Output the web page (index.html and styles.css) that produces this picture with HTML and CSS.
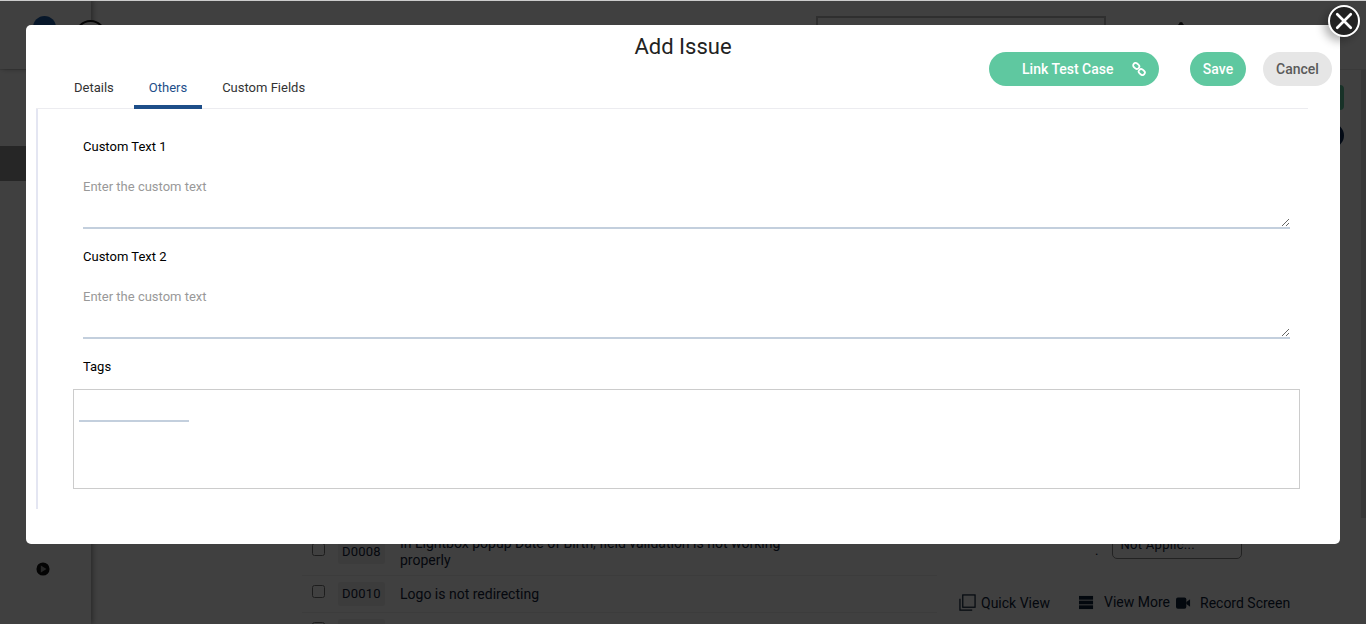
FILE: index.html
```html
<!DOCTYPE html>
<html lang="en">
<head>
<meta charset="utf-8">
<title>Add Issue</title>
<link rel="stylesheet" href="styles.css">
</head>
<body>
<div class="page">
  <header class="topbar">
    <div class="brand">
      <span class="dot"></span>
      <span class="ring"></span>
    </div>
    <div class="search"></div>
    <svg class="bell" viewBox="0 0 16 16" width="16" height="16"><path d="M8 1a2 2 0 0 1 2 2c2 1 2.500 3 2.500 5l1.500 3H2l1.500-3C3.500 6 4 4 6 3a2 2 0 0 1 2-2z" fill="#222"/></svg>
  </header>
  <div class="workspace">
    <aside class="sidebar">
      <div class="side-active"></div>
      <svg class="side-play" viewBox="0 0 16 16" width="14" height="14"><circle cx="8" cy="8" r="7.500" fill="#111"/><path d="M5.500 4v8l6.500-4z" fill="#999"/></svg>
    </aside>
    <main class="list-area">
      <div class="issue-list">
        <div class="issue-row">
          <input class="check" type="checkbox">
          <span class="code">D0008</span>
          <p class="issue-text">In Lightbox popup Date of Birth, field validation is not working properly</p>
        </div>
        <div class="issue-row">
          <input class="check" type="checkbox">
          <span class="code">D0010</span>
          <p class="issue-text">Logo is not redirecting</p>
        </div>
        <div class="issue-row">
          <input class="check" type="checkbox">
          <span class="code"></span>
        </div>
      </div>
    </main>
    <section class="detail">
      <div class="status-chips">
        <span class="chip-green"></span>
        <span class="chip-dark"></span>
      </div>
      <div class="select-line"><span class="bullet">.</span><span class="select">Not Applic...</span></div>
      <div class="detail-actions">
        <span class="act act-quick"><svg viewBox="0 0 18 18" width="17" height="17" fill="none" stroke="#0e2238" stroke-width="1.300"><rect x="4" y="1" width="13" height="13"/><path d="M1 5v12h13"/></svg>Quick View</span>
        <span class="act act-more"><svg viewBox="0 0 16 16" width="15" height="15" fill="#0e2238"><rect y="1" width="15" height="4"/><rect y="6" width="15" height="4"/><rect y="11" width="15" height="4"/></svg>View More</span>
        <span class="act act-rec"><svg viewBox="0 0 16 12" width="15" height="12" fill="#0e2238"><rect width="11" height="12" rx="2"/><path d="M11 5l4-3v8l-4-3z"/></svg>Record Screen</span>
      </div>
    </section>
  </div>
</div>

<div class="backdrop"></div>

<div class="modal">
  <div class="modal-head">
    <h1 class="modal-title">Add Issue</h1>
    <div class="modal-actions">
      <button class="btn btn-link" type="button">Link Test Case
        <svg class="link-icon" viewBox="0 0 14 14" width="14" height="14" fill="none" stroke="#fff" stroke-width="1.800"><rect x="1" y="1.500" width="6.500" height="4.800" rx="2.400" transform="rotate(40 4.200 3.900)"/><rect x="6.500" y="7.700" width="6.500" height="4.800" rx="2.400" transform="rotate(40 9.800 10.100)"/></svg>
      </button>
      <button class="btn btn-save" type="button">Save</button>
      <button class="btn btn-cancel" type="button">Cancel</button>
    </div>
    <nav class="tabs">
      <a class="tab">Details</a>
      <a class="tab tab-active">Others</a>
      <a class="tab">Custom Fields</a>
    </nav>
  </div>
  <div class="form-pane">
    <div class="field">
      <label class="field-label">Custom Text 1</label>
      <textarea class="field-area" placeholder="Enter the custom text"></textarea>
    </div>
    <div class="field">
      <label class="field-label">Custom Text 2</label>
      <textarea class="field-area" placeholder="Enter the custom text"></textarea>
    </div>
    <div class="field field-tags">
      <label class="field-label">Tags</label>
      <div class="tags-box"><input class="tags-input" type="text"></div>
    </div>
  </div>
</div>

<button class="close" type="button" aria-label="Close">
  <svg viewBox="0 0 16 16" width="18" height="18" fill="none" stroke="#fff" stroke-width="2.400" stroke-linecap="round"><path d="M2 2l12 12M14 2L2 14"/></svg>
</button>
</body>
</html>
```
FILE: styles.css
```css
* { box-sizing: border-box; }
html, body { height: 100%; }
body {
  margin: 0;
  overflow: hidden;
  background: #fff;
  color: #14233a;
  font-family: Roboto, "Liberation Sans", sans-serif;
}

/* Page behind the dialog */
.page { height: 624px; display: flex; flex-direction: column; overflow: hidden; background: #fff; }
.topbar {
  height: 70px;
  flex: none;
  display: flex;
  align-items: flex-start;
  border-bottom: 1px solid #e6e6e6;
}
.brand {
  flex: none;
  width: 91px;
  height: 69px;
  display: flex;
  gap: 19px;
  padding: 16px 0 0 33px;
  box-shadow: 2px 0 5px rgba(0,0,0,.35);
}
.dot { flex: none; width: 23px; height: 23px; border-radius: 50%; background: #1d5da8; }
.ring { flex: none; width: 31px; height: 31px; margin-top: 4px; border-radius: 50%; border: 2px solid #111; background: #fff; }
.search { width: 290px; height: 40px; margin: 16px 0 0 725px; border: 2px solid #bdbdbd; }
.bell { margin: 21px 0 0 67px; }
.workspace { flex: 1; display: flex; min-height: 0; overflow: hidden; }
.sidebar {
  width: 91px;
  flex: none;
  padding-top: 76px;
  box-shadow: 2px 0 5px rgba(0,0,0,.35);
}
.side-active { height: 35px; background: #999; }
.side-play { display: block; margin: 381px 0 0 36px; }
.list-area { width: 856px; flex: none; padding: 0 10px 0 211px; }
.issue-list { margin-top: 459px; width: 635px; background: #fdfdfd; }
.issue-row {
  display: flex;
  align-items: center;
  gap: 13px;
  padding: 6px 0;
  padding-left: 10px;
  border-bottom: 1px solid #eeeeee;
  min-height: 36px;
}
.check { width: 13px; height: 13px; margin: -6px 0 0; flex: none; }
.code {
  flex: none;
  width: 47px;
  height: 24px;
  border-radius: 3px;
  background: #efefef;
  font-size: 13px;
  line-height: 24px;
  text-align: center;
  letter-spacing: .2px;
}
.issue-text { width: 400px; margin: 0 0 0 2px; font-size: 14px; line-height: 17px; }
.detail { flex: 1; display: flex; flex-direction: column; padding-left: 12px; position: relative; }
.detail::after { content: ""; position: absolute; top: 0; right: 0; width: 5px; height: 448px; background: #dedede; }
.status-chips { position: absolute; right: 22px; top: 15px; display: flex; flex-direction: column; gap: 13px; align-items: flex-end; }
.chip-green { width: 30px; height: 25px; border-radius: 4px; background: #5fc8a0; }
.chip-dark { width: 25px; height: 25px; border-radius: 50%; background: #0c2a55; }
.select-line { margin: 459px 0 0 136px; display: flex; align-items: flex-end; gap: 14px; font-size: 13px; }
.bullet { font-size: 13px; line-height: 16px; }
.select {
  width: 130px;
  height: 30px;
  padding: 7px 0 0 7px;
  border: 1px solid #888;
  border-radius: 5px;
  letter-spacing: .3px;
}
.detail-actions { display: flex; margin-top: 35px; font-size: 14px; color: #0e2238; }
.act { display: inline-flex; align-items: center; gap: 5px; }
.act-quick { width: 120px; }
.act-more { width: 97px; gap: 10px; margin-top: -1px; }
.act-rec { gap: 9px; }

/* Dimmed layer */
.backdrop { position: fixed; inset: 1px 0 0 0; background: rgba(0,0,0,.75); }
body::before { content: ""; position: fixed; z-index: 5; top: 0; left: 0; right: 0; height: 1px; background: #ccc; }

/* Dialog */
.modal {
  position: fixed;
  top: 25px;
  left: 26px;
  width: 1314px;
  height: 519px;
  padding: 0 8px 0 10px;
  background: #fff;
  border-radius: 5px;
}
.modal-head {
  display: grid;
  grid-template-columns: 1fr auto;
  grid-template-rows: 43px 40px;
  padding-left: 23px;
  margin-right: 24px;
  border-bottom: 1px solid #ececf0;
}
.modal-title {
  grid-column: 1 / -1;
  grid-row: 1;
  margin: 0;
  padding: 7px 1px 0 0;
  font-size: 22px;
  font-weight: 400;
  line-height: 29px;
  color: #222;
  text-align: center;
}
.modal-actions {
  grid-column: 2;
  grid-row: 1 / 3;
  display: flex;
  align-items: flex-start;
  margin: 27px -24px 0 0;
  z-index: 1;
}
.btn {
  height: 34px;
  padding: 0;
  border: 0;
  border-radius: 17px;
  font-family: inherit;
  font-size: 14px;
  font-weight: 500;
  cursor: pointer;
}
.btn-link {
  width: 170px;
  display: flex;
  align-items: center;
  padding-left: 33px;
  background: #5fc8a0;
  color: #fff;
}
.link-icon { margin-left: 18px; }
.btn-save { width: 56px; margin-left: 31px; background: #5fc8a0; color: #fff; }
.btn-cancel { width: 69px; margin-left: 17px; background: #e6e6e6; color: #5a5a5a; }
.tabs { grid-column: 1; grid-row: 2; display: flex; align-self: end; }
.tab {
  padding: 0 15px;
  height: 41px;
  font-size: 13px;
  line-height: 40px;
  color: #333;
  border-bottom: 4px solid transparent;
  margin-bottom: -1px;
}
.tab-active { color: #1d4e89; border-bottom-color: #1d4e89; margin: 0 5px -1px 5px; }
.form-pane {
  width: 1304px;
  height: 400px;
  padding: 0 10px 0 35px;
  border-left: 2px solid #e4e6f2;
}
.field { display: flex; flex-direction: column; padding-top: 30px; padding-left: 10px; }
.field + .field { padding-top: 20px; }
.field-label { font-size: 13px; line-height: 16px; color: #000; }
.field-area {
  display: block;
  width: 1207px;
  height: 60px;
  margin-top: 14px;
  padding: 10px 0 0;
  border: 0;
  border-bottom: 2px solid #c3cfdd;
  outline: 0;
  background: transparent;
  font-family: inherit;
  font-size: 13px;
  line-height: 16px;
  color: #333;
}
.field-area::placeholder { color: #999; opacity: 1; }
.field-tags { padding-left: 0; }
.field-tags .field-label { padding-left: 10px; }
.tags-box {
  width: 1227px;
  height: 100px;
  margin-top: 14px;
  padding: 11px 0 0 5px;
  border: 1px solid #ccc;
}
.tags-input {
  display: block;
  width: 110px;
  height: 21px;
  padding: 0;
  border: 0;
  border-bottom: 2px solid #c3cfdd;
  outline: 0;
}

/* Close button */
.close {
  position: fixed;
  top: 5px;
  left: 1328px;
  width: 32px;
  height: 32px;
  padding: 0;
  display: flex;
  align-items: center;
  justify-content: center;
  border: 2px solid #fff;
  border-radius: 50%;
  background: #222;
  box-shadow: -4px 4px 10px rgba(0,0,0,.3);
}
```
